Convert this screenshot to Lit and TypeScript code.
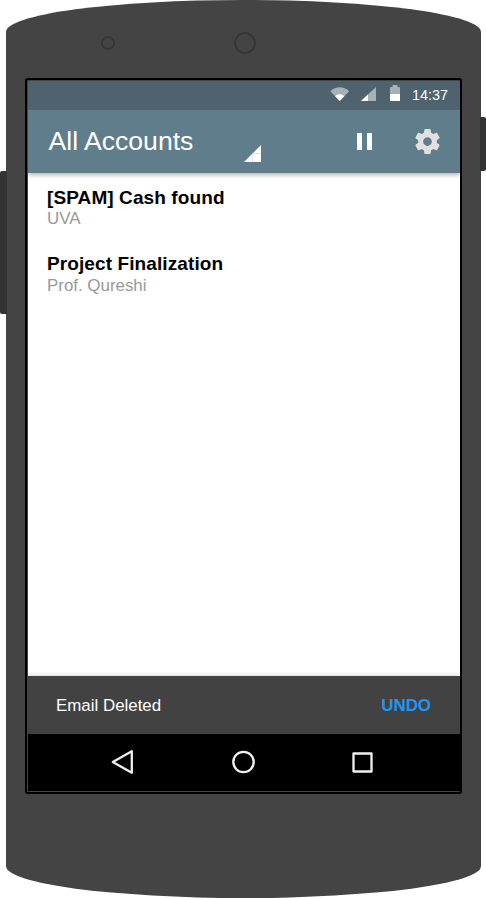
import { LitElement, html, css } from "lit";
import { customElement } from "lit/decorators.js";

interface Mail {
  subject: string;
  sender: string;
}

const MAILS: Mail[] = [
  { subject: "[SPAM] Cash found", sender: "UVA" },
  { subject: "Project Finalization", sender: "Prof. Qureshi" },
];

@customElement("status-bar")
class StatusBar extends LitElement {
  static styles = css`
    :host {
      display: flex;
      align-items: flex-end;
      justify-content: flex-end;
      height: 29px;
      padding-right: 12px;
      box-sizing: border-box;
      background: #4e636d;
      color: #fff;
      position: relative;
      z-index: 1;
    }
    svg { display: block; flex: none; margin-bottom: 9px; }
    .wifi { margin-right: 11px; }
    .signal { margin-right: 14px; }
    .battery { margin-right: 12px; }
    .clock { font-size: 14.4px; line-height: 29px; width: 36px; white-space: nowrap; }
  `;
  render() {
    return html`
      <svg class="wifi" width="20" height="14" viewBox="0 0 20 14">
        <path d="M.3 4.2C5.5-1.1 14-1.1 19.2 4.2L9.7 14z" fill="#a7b1b6" />
        <path d="M5.200 9.200C7.300 6.500 12.100 6.500 14.200 9.200L9.700 14z" fill="#fff" />
      </svg>
      <svg class="signal" width="15" height="14" viewBox="0 0 15 14">
        <path d="M15 0V14H0z" fill="#a7b1b6" />
        <path d="M7 7.500V14H0z" fill="#fff" />
      </svg>
      <svg class="battery" width="10" height="16" viewBox="0 0 10 16">
        <path d="M2.500 0h5V2H9.200q.8 0 .8.800V9H0V2.800q0-.8.800-.8H2.500z" fill="#a7b1b6" />
        <path d="M0 9H10V16H0z" fill="#fff" />
      </svg>
      <span class="clock">14:37</span>
    `;
  }
}

@customElement("app-bar")
class AppBar extends LitElement {
  static styles = css`
    :host {
      display: flex;
      align-items: center;
      position: relative;
      height: 63px;
      box-sizing: border-box;
      padding: 0 20px 0 20.5px;
      background: #607d8b;
      color: #fff;
      box-shadow: 0 2px 4px rgba(0, 0, 0, 0.3);
    }
    svg { display: block; flex: none; }
    .title { width: 195.5px; font-size: 26.6px; line-height: 63px; white-space: nowrap; }
    .drop { margin: 24px 96px 0 0; }
    .pause { margin-right: 43px; }
  `;
  render() {
    return html`
      <span class="title">All Accounts</span>
      <svg class="drop" width="17" height="17" viewBox="0 0 17 17">
        <path d="M17 0V17H0z" fill="#fff" />
        <path d="M8.500 8.500V17M8.500 8.500H17" stroke="#d5dde0" stroke-width=".8" />
      </svg>
      <svg class="pause" width="15" height="17" viewBox="0 0 15 17">
        <path d="M0 0H5V17H0zM10 0H15V17H10z" fill="#fafafa" />
      </svg>
      <svg width="25" height="25" viewBox="2 2 20 20">
        <path fill="#e0e0e0" d="M19.430 12.980c.04-.32.070-.64.070-.98s-.03-.66-.070-.98l2.110-1.650c.19-.15.24-.42.12-.64l-2-3.460c-.12-.22-.39-.3-.61-.22l-2.490 1c-.52-.4-1.080-.73-1.690-.98l-.38-2.650C14.460 2.180 14.250 2 14 2h-4c-.25 0-.46.180-.49.420l-.38 2.650c-.61.250-1.170.590-1.690.980l-2.490-1c-.23-.090-.49 0-.61.220l-2 3.460c-.13.220-.070.490.12.640l2.110 1.650c-.04.320-.070.650-.070.980s.03.660.070.980l-2.110 1.650c-.19.150-.24.420-.12.640l2 3.460c.12.220.39.300.61.220l2.490-1c.52.400 1.080.730 1.690.980l.38 2.650c.03.240.24.420.49.420h4c.25 0 .46-.18.49-.42l.38-2.650c.61-.25 1.170-.59 1.690-.98l2.490 1c.23.090.49 0 .61-.22l2-3.460c.12-.22.070-.49-.12-.64l-2.110-1.650zM12 15.500c-1.930 0-3.500-1.570-3.500-3.500s1.570-3.500 3.500-3.500 3.500 1.570 3.500 3.500-1.570 3.500-3.500 3.500z" />
      </svg>
    `;
  }
}

@customElement("nav-bar")
class NavBar extends LitElement {
  static styles = css`
    :host {
      display: grid;
      grid-template-columns: 25px 25px 25px;
      column-gap: 95px;
      align-items: center;
      padding: 0 0 1px 82px;
      height: 57px;
      box-sizing: border-box;
      background: #000;
    }
    svg { display: block; }
    .icon { fill: none; stroke: #f0f0f0; stroke-width: 2.300; stroke-linejoin: round; }
  `;
  render() {
    return html`
      <svg class="icon" width="25" height="26" viewBox="0 0 25 26"><path d="M21.800 2.200V23.800L2.800 13z" /></svg>
      <svg class="icon" width="25" height="26" viewBox="0 0 25 26"><circle cx="13.500" cy="13" r="10.200" /></svg>
      <svg class="icon" width="25" height="26" viewBox="0 0 25 26"><path d="M3.500 4.500H21.500V22.500H3.500z" /></svg>
    `;
  }
}

@customElement("app-root")
class AppRoot extends LitElement {
  static styles = css`
    :host {
      display: block;
      width: 486px;
      height: 898px;
      position: relative;
      overflow: hidden;
      background: #fff;
      font-family: "Liberation Sans", Arial, sans-serif;
    }
    .body {
      margin: 0 5px 0 6px;
      height: 898px;
      box-sizing: border-box;
      padding: 0 19px;
      background: #444;
      border-radius: 237.500px / 32px;
    }
    .side { position: absolute; background: #333; }
    .volume { left: 0; top: 171px; width: 7px; height: 143px; border-radius: 2px 0 0 2px; }
    .power { left: 480px; top: 117px; width: 6px; height: 54px; border-radius: 0 2px 2px 0; }
    .top { display: flex; align-items: center; height: 78px; padding: 8px 0 0 76px; box-sizing: border-box; }
    .sensor { width: 14px; height: 14px; box-sizing: border-box; border: 2px solid #373737; border-radius: 50%; }
    .camera { width: 22px; height: 22px; margin-left: 119px; box-sizing: border-box; border: 2px solid #373737; border-radius: 50%; }
    .screen {
      display: flex;
      flex-direction: column;
      width: 437px;
      height: 716px;
      box-sizing: border-box;
      border: 2px solid #000;
      border-radius: 3px;
      background: #444;
      padding: 1px 0 1px 1px;
    }
    .list { flex: 1; background: #fff; padding: 14px 0 0 19px; }
    .mail { height: 66px; }
    .subject { font-weight: 700; font-size: 19px; letter-spacing: 0.1px; line-height: 22px; color: #000; }
    .sender { font-size: 16.9px; line-height: 20px; color: #999; }
    .mail + .mail .sender { line-height: 22px; }
    .snack {
      display: flex;
      align-items: center;
      justify-content: space-between;
      position: relative;
      height: 58px;
      padding: 2px 29px 0 28px;
      box-sizing: border-box;
      background: #424242;
      color: #fff;
      font-size: 16.900px;
      box-shadow: 0 -1px 4px rgba(0, 0, 0, 0.160);
    }
    .undo { color: #2196f3; font-weight: 700; }
    .clip { display: flex; flex-direction: column; flex: 1; overflow: hidden; }
  `;
  render() {
    return html`
      <div class="body">
        <div class="top">
          <div class="sensor"></div>
          <div class="camera"></div>
        </div>
        <div class="screen">
          <div class="clip">
            <status-bar></status-bar>
            <app-bar></app-bar>
            <div class="list">
              ${MAILS.map(
                (m) => html`<div class="mail">
                  <div class="subject">${m.subject}</div>
                  <div class="sender">${m.sender}</div>
                </div>`
              )}
            </div>
            <div class="snack"><span>Email Deleted</span><span class="undo">UNDO</span></div>
            <nav-bar></nav-bar>
          </div>
        </div>
      </div>
      <div class="side volume"></div>
      <div class="side power"></div>
    `;
  }
}
